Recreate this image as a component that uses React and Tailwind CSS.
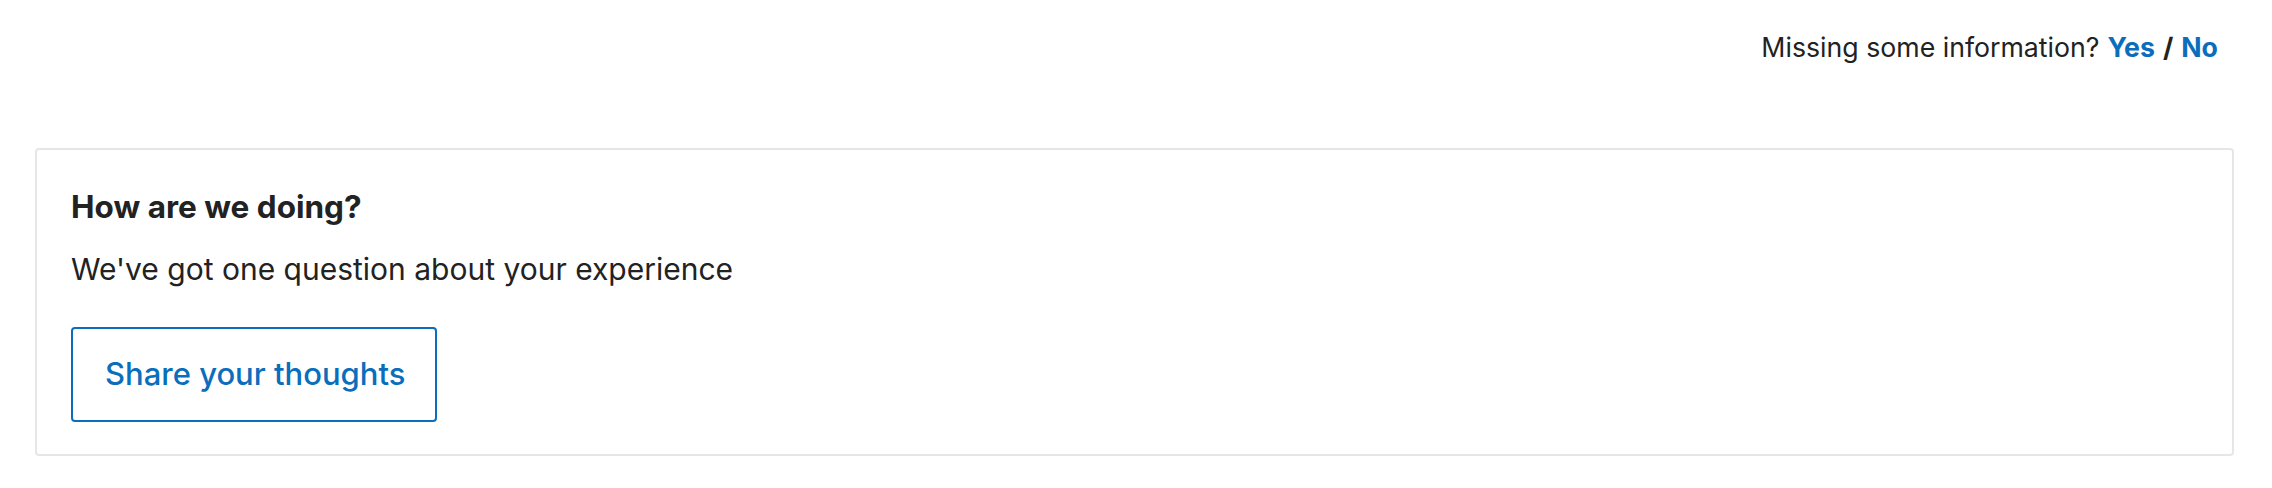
export default function App() {
  return (
    <div className="min-h-screen bg-white font-['Inter',sans-serif] text-[#222]">
      {/* feedback line */}
      <div className="flex justify-end pr-[54px] pt-[25px] text-[26.7px] leading-[44px]">
        <span>Missing some information?</span>
        <a href="#" className="ml-[8px] font-bold text-[#0a6ebd]">Yes</a>
        <span className="mx-[8px] font-bold">/</span>
        <a href="#" className="font-bold text-[#0a6ebd]">No</a>
      </div>

      {/* survey card */}
      <div className="ml-[35px] mr-[38px] mt-[79px] rounded-[4px] border-2 border-[#e6e6e6] px-[34px] pt-[33px] pb-[32px]">
        <h2 className="text-[31.5px] font-bold leading-[47px]">How are we doing?</h2>
        <p className="mt-[17px] text-[30px] leading-[45px]">We've got one question about your experience</p>
        <button className="mt-[35px] h-[95px] rounded-[4px] border-2 border-[#0a6ebd] pl-[32px] pr-[30px] text-[31px] font-medium text-[#0a6ebd]">
          Share your thoughts
        </button>
      </div>
    </div>
  )
}
